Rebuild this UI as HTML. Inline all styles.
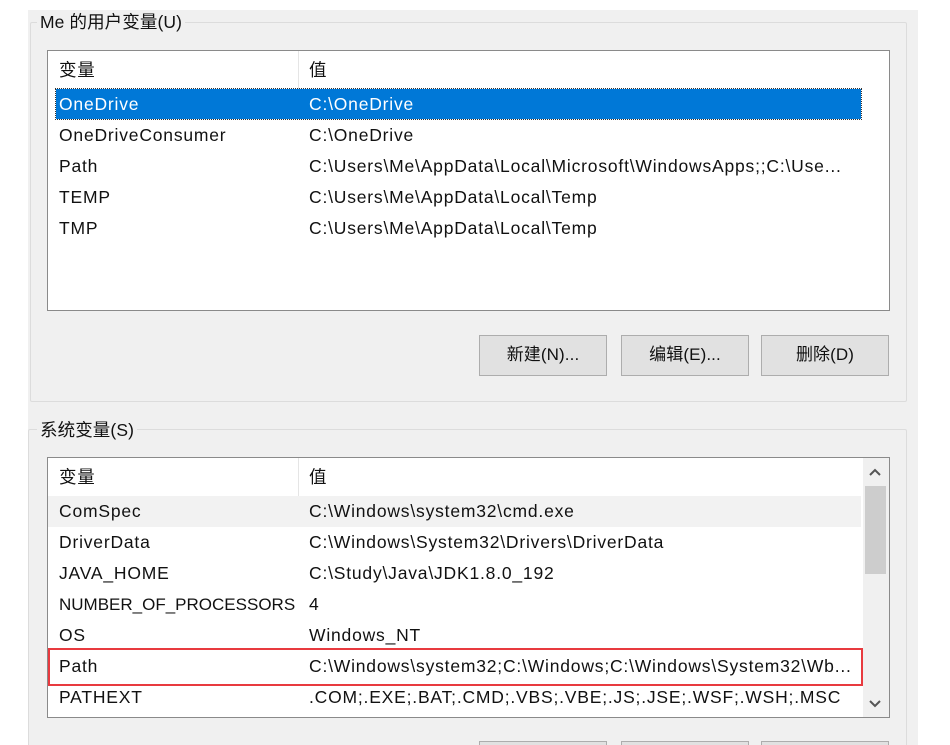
<!DOCTYPE html>
<html><head><meta charset="utf-8"><style>
*{margin:0;padding:0;box-sizing:border-box}
html,body{width:950px;height:745px;overflow:hidden}
body{background:#fff;position:relative;font-family:"Liberation Sans","Noto Sans CJK SC",sans-serif;font-size:17.5px;letter-spacing:0.8px;color:#111}
.a{position:absolute}
.panel{left:28px;top:10px;width:890px;height:735px;background:#f0f0f0}
.grp{border:1px solid #dcdcdc;border-radius:2px}
.lbl{background:#f0f0f0;padding:0 3px;line-height:20px;letter-spacing:0.1px}
.list{background:#fff;border:1px solid #8a8a8a}
.row{position:absolute;left:0;height:31px;line-height:31px;white-space:nowrap}
.c1{position:absolute;left:11px}
.c2{position:absolute;left:261px}
.btn{background:#e1e1e1;border:1px solid #adadad;text-align:center;line-height:38px;font-size:17px;letter-spacing:0.1px}
</style></head><body>
<div class="a panel"></div>
<div class="a grp" style="left:30px;top:22px;width:877px;height:380px"></div>
<div class="a lbl" style="left:37px;top:12px">Me 的用户变量(U)</div>
<div class="a list" style="left:47px;top:50px;width:843px;height:261px">
  <div class="a" style="left:250px;top:0;width:1px;height:38px;background:#e5e5e5"></div>
  <div class="row" style="top:4px;width:100%"><span class="c1">变量</span><span class="c2">值</span></div>
  <div class="row" style="top:38px;left:8px;width:805px;height:30px;line-height:30px;background:#0078d7;color:#fff;outline:1px dotted #333"><span class="c1" style="left:3px">OneDrive</span><span class="c2" style="left:253px">C:\OneDrive</span></div>
  <div class="row" style="top:69px"><span class="c1">OneDriveConsumer</span><span class="c2">C:\OneDrive</span></div>
  <div class="row" style="top:100px"><span class="c1">Path</span><span class="c2">C:\Users\Me\AppData\Local\Microsoft\WindowsApps;;C:\Use...</span></div>
  <div class="row" style="top:131px"><span class="c1">TEMP</span><span class="c2">C:\Users\Me\AppData\Local\Temp</span></div>
  <div class="row" style="top:162px"><span class="c1">TMP</span><span class="c2">C:\Users\Me\AppData\Local\Temp</span></div>
</div>
<div class="a btn" style="left:479px;top:335px;width:128px;height:41px">新建(N)...</div>
<div class="a btn" style="left:621px;top:335px;width:128px;height:41px">编辑(E)...</div>
<div class="a btn" style="left:761px;top:335px;width:128px;height:41px">删除(D)</div>

<div class="a grp" style="left:28px;top:429px;width:879px;height:330px"></div>
<div class="a lbl" style="left:37px;top:420px">系统变量(S)</div>
<div class="a list" style="left:47px;top:457px;width:843px;height:261px">
  <div class="a" style="left:250px;top:0;width:1px;height:38px;background:#e5e5e5"></div>
  <div class="row" style="top:4px;width:100%"><span class="c1">变量</span><span class="c2">值</span></div>
  <div class="row" style="top:38px;width:813px;background:#f2f2f2"><span class="c1">ComSpec</span><span class="c2">C:\Windows\system32\cmd.exe</span></div>
  <div class="row" style="top:69px"><span class="c1">DriverData</span><span class="c2">C:\Windows\System32\Drivers\DriverData</span></div>
  <div class="row" style="top:100px"><span class="c1">JAVA_HOME</span><span class="c2">C:\Study\Java\JDK1.8.0_192</span></div>
  <div class="row" style="top:131px"><span class="c1" style="letter-spacing:0px;font-size:17px">NUMBER_OF_PROCESSORS</span><span class="c2">4</span></div>
  <div class="row" style="top:162px"><span class="c1">OS</span><span class="c2">Windows_NT</span></div>
  <div class="row" style="top:193px"><span class="c1">Path</span><span class="c2">C:\Windows\system32;C:\Windows;C:\Windows\System32\Wb...</span></div>
  <div class="row" style="top:224px"><span class="c1">PATHEXT</span><span class="c2">.COM;.EXE;.BAT;.CMD;.VBS;.VBE;.JS;.JSE;.WSF;.WSH;.MSC</span></div>
  <div class="a" style="left:815px;top:0;width:26px;height:259px;background:#f0f0f0"></div>
  <div class="a" style="left:817px;top:28px;width:21px;height:88px;background:#cdcdcd"></div>
  <svg class="a" style="left:820px;top:10px" width="14" height="10"><path d="M2 7 L7 2 L12 7" fill="none" stroke="#555" stroke-width="2"/></svg>
  <svg class="a" style="left:820px;top:240px" width="14" height="10"><path d="M2 3 L7 8 L12 3" fill="none" stroke="#555" stroke-width="2"/></svg>
</div>
<div class="a" style="left:48px;top:648px;width:815px;height:38px;border:2px solid #e83a3f"></div>
<div class="a btn" style="left:479px;top:741px;width:128px;height:41px"></div>
<div class="a btn" style="left:621px;top:741px;width:128px;height:41px"></div>
<div class="a btn" style="left:761px;top:741px;width:128px;height:41px"></div>
</body></html>
